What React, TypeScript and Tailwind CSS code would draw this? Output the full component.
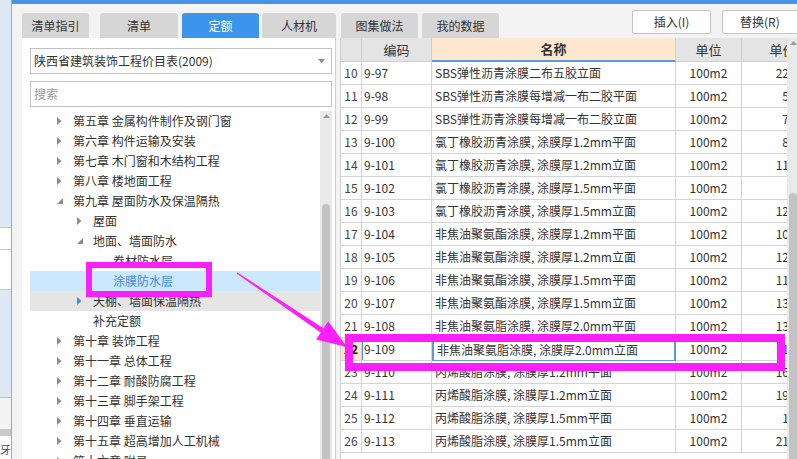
import React from "react";

type TreeItem = {
  level: number;
  arrow: "c" | "e" | null;
  text: string;
  state?: "selected" | "hover";
};

const tree: TreeItem[] = [
  { level: 1, arrow: "c", text: "第五章 金属构件制作及钢门窗" },
  { level: 1, arrow: "c", text: "第六章 构件运输及安装" },
  { level: 1, arrow: "c", text: "第七章 木门窗和木结构工程" },
  { level: 1, arrow: "c", text: "第八章 楼地面工程" },
  { level: 1, arrow: "e", text: "第九章 屋面防水及保温隔热" },
  { level: 2, arrow: "c", text: "屋面" },
  { level: 2, arrow: "e", text: "地面、墙面防水" },
  { level: 3, arrow: null, text: "卷材防水层" },
  { level: 3, arrow: null, text: "涂膜防水层", state: "selected" },
  { level: 2, arrow: "c", text: "天棚、墙面保温隔热", state: "hover" },
  { level: 2, arrow: null, text: "补充定额" },
  { level: 1, arrow: "c", text: "第十章 装饰工程" },
  { level: 1, arrow: "c", text: "第十一章 总体工程" },
  { level: 1, arrow: "c", text: "第十二章 耐酸防腐工程" },
  { level: 1, arrow: "c", text: "第十三章 脚手架工程" },
  { level: 1, arrow: "c", text: "第十四章 垂直运输" },
  { level: 1, arrow: "c", text: "第十五章 超高增加人工机械" },
  { level: 1, arrow: "c", text: "第十六章 附录" },
];

const rows: [string, string, string, string][] = [
  ["10", "9-97", "SBS弹性沥青涂膜二布五胶立面", "2228.41"],
  ["11", "9-98", "SBS弹性沥青涂膜每增减一布二胶平面", "583.17"],
  ["12", "9-99", "SBS弹性沥青涂膜每增减一布二胶立面", "712.09"],
  ["13", "9-100", "氯丁橡胶沥青涂膜, 涂膜厚1.2mm平面", "836.52"],
  ["14", "9-101", "氯丁橡胶沥青涂膜, 涂膜厚1.2mm立面", "1107.84"],
  ["15", "9-102", "氯丁橡胶沥青涂膜, 涂膜厚1.5mm平面", ""],
  ["16", "9-103", "氯丁橡胶沥青涂膜, 涂膜厚1.5mm立面", "1245.60"],
  ["17", "9-104", "非焦油聚氨酯涂膜, 涂膜厚1.2mm平面", "1032.18"],
  ["18", "9-105", "非焦油聚氨酯涂膜, 涂膜厚1.2mm立面", "1267.45"],
  ["19", "9-106", "非焦油聚氨酯涂膜, 涂膜厚1.5mm平面", "1154.03"],
  ["20", "9-107", "非焦油聚氨酯涂膜, 涂膜厚1.5mm立面", "1318.77"],
  ["21", "9-108", "非焦油聚氨脂涂膜, 涂膜厚2.0mm平面", "1376.20"],
  ["22", "9-109", "非焦油聚氨脂涂膜, 涂膜厚2.0mm立面", "158.42"],
  ["23", "9-110", "丙烯酸脂涂膜, 涂膜厚1.2mm平面", "1623.50"],
  ["24", "9-111", "丙烯酸脂涂膜, 涂膜厚1.2mm立面", "1945.33"],
  ["25", "9-112", "丙烯酸脂涂膜, 涂膜厚1.5mm平面", "186.40"],
  ["26", "9-113", "丙烯酸脂涂膜, 涂膜厚1.5mm立面", "2108.66"],
];

function Arrow({ kind, blue }: { kind: "c" | "e"; blue?: boolean }) {
  const fill = blue ? "#3b8fe0" : "#8c8c8c";
  if (kind === "c") {
    return (
      <svg width="5" height="8" viewBox="0 0 5 8">
        <polygon points="0,0 4.5,4 0,8" fill={fill} />
      </svg>
    );
  }
  return (
    <svg width="6" height="6" viewBox="0 0 6 6">
      <polygon points="6,0 6,6 0,6" fill={fill} />
    </svg>
  );
}

function ScrollBar({ thumbTop }: { thumbTop: string }) {
  return (
    <div className="w-[12px] shrink-0 bg-[#e9e9e9] flex flex-col items-center">
      <svg width="7" height="4" viewBox="0 0 7 4" className="mt-[3px]">
        <polygon points="0,4 3.5,0 7,4" fill="#9a9a9a" />
      </svg>
      <div className={`w-[8px] flex-1 rounded-t-[4px] bg-[#c3c3c3] ${thumbTop}`} />
    </div>
  );
}

export default function App() {
  return (
    <div className="relative w-[797px] h-[459px] overflow-hidden flex font-['Noto_Sans_CJK_SC',sans-serif] text-[12px] text-[#333]">
      {/* background window strip */}
      <div className="w-[12px] shrink-0 flex flex-col border-r border-[#a9a9a9]">
        <div className="h-[228px] bg-[#dfe9f6] border-b border-[#b9c3cf]" />
        <div className="h-[22px] bg-white border-b border-[#c9c9c9]" />
        <div className="h-[40px] bg-white border-b border-[#c9c9c9]" />
        <div className="h-[108px] bg-[#dfe9f6] border-b border-[#b9c3cf]" />
        <div className="h-[31px] bg-[#f4f4f4]" />
        <div className="h-[7px] bg-[#c9c9c9]" />
        <div className="flex-1 bg-white text-[11px] leading-none pt-[8px] text-[#555] overflow-hidden whitespace-nowrap">牙有</div>
      </div>

      <div className="flex-1 flex flex-col bg-[#f3f3f3] min-w-0">
        <div className="h-[4px] bg-[#4594e6]" />

        {/* tabs + buttons */}
        <div className="h-[34px] flex items-start pl-[10px]">
          <div className="flex items-end h-[34px] pt-[9px]">
            <div className="w-[67px] h-[25px] rounded-t-[3px] bg-[#d6d6d6] flex items-center justify-center">清单指引</div>
            <div className="w-[78px] h-[25px] ml-[11px] rounded-t-[3px] bg-[#d6d6d6] flex items-center justify-center">清单</div>
            <div className="w-[77px] h-[25px] ml-[4px] rounded-t-[3px] bg-[#3c95ea] text-white flex items-center justify-center">定额</div>
            <div className="w-[74px] h-[25px] ml-[3px] rounded-t-[3px] bg-[#d6d6d6] flex items-center justify-center">人材机</div>
            <div className="w-[77px] h-[25px] ml-[5px] rounded-t-[3px] bg-[#d6d6d6] flex items-center justify-center">图集做法</div>
            <div className="w-[77px] h-[25px] ml-[4px] rounded-t-[3px] bg-[#d6d6d6] flex items-center justify-center">我的数据</div>
          </div>
          <div className="ml-[133px] mt-[6px] w-[79px] h-[24px] shrink-0 bg-white border border-[#c4c4c4] rounded-[2px] flex items-center justify-center">插入(I)</div>
          <div className="ml-[11px] mt-[6px] w-[80px] h-[24px] shrink-0 bg-white border border-[#c4c4c4] rounded-[2px] flex items-center pl-[17px]">替换(R)</div>
        </div>

        <div className="flex-1 flex min-h-0">
          {/* left panel */}
          <div className="ml-[10px] w-[314px] shrink-0 bg-white border-r border-[#cfcfcf] flex flex-col">
            <div className="mx-[8px] mr-[3px] mt-[10px] h-[26px] border border-[#c2c2c2] flex items-center pl-[3px] pr-[6px]">
              <span className="flex-1">陕西省建筑装饰工程价目表(2009)</span>
              <svg width="7" height="4" viewBox="0 0 7 4">
                <polygon points="0,0 7,0 3.5,4" fill="#8c8c8c" />
              </svg>
            </div>
            <div className="mx-[8px] mr-[3px] mt-[7px] h-[26px] border border-[#c2c2c2] flex items-center pl-[3px] text-[#9a9a9a]">搜索</div>
            <div className="flex-1 flex mt-[3px] min-h-0 pl-[8px] pr-[3px]">
              <div className="flex-1 pt-[1px] overflow-hidden">
                {tree.map((t, i) => (
                  <div
                    key={i}
                    className={`h-[20px] flex items-center whitespace-nowrap ${
                      t.state === "selected"
                        ? "bg-[#cce8ff] text-[#3d8be0]"
                        : t.state === "hover"
                        ? "bg-[#e5e5e5]"
                        : ""
                    } ${t.level === 1 ? "pl-[24px]" : t.level === 2 ? "pl-[44px]" : "pl-[64px]"}`}
                  >
                    <div className="w-[19px] flex items-center pl-[3px]">
                      {t.arrow && <Arrow kind={t.arrow} blue={t.state === "hover"} />}
                    </div>
                    <span>{t.text}</span>
                  </div>
                ))}
              </div>
              <div className="flex pt-[1px]">
                <ScrollBar thumbTop="mt-[86px]" />
              </div>
            </div>
          </div>

          {/* table */}
          <div className="ml-[4px] flex-1 flex min-w-0">
            <div className="flex-1 overflow-hidden border-l border-[#cfcfcf] bg-white">
              <div className="w-[482px]">
                <div className="h-[24px] flex text-[13px]">
                  <div className="w-[21px] bg-[#e4e4e4] border-r border-b border-[#cfcfcf]" />
                  <div className="w-[70px] bg-[#e4e4e4] border-r border-b border-[#cfcfcf] flex items-center justify-center">编码</div>
                  <div className="w-[244px] bg-[#fde8cf] border-r border-b-2 border-r-[#cfcfcf] border-b-[#5b9bd5] flex items-center justify-center font-bold">名称</div>
                  <div className="w-[66px] bg-[#e4e4e4] border-r border-b border-[#cfcfcf] flex items-center justify-center">单位</div>
                  <div className="w-[81px] bg-[#e4e4e4] border-b border-[#cfcfcf] flex items-center justify-center">单价</div>
                </div>
                {rows.map(([n, code, name, price]) => {
                  const sel = n === "22";
                  return (
                    <div key={n} className="h-[23px] flex whitespace-nowrap">
                      <div className={`w-[21px] border-r border-b border-[#d4d4d4] flex items-center justify-center ${sel ? "bg-[#fde3c8] font-bold text-[#111]" : "text-[#444]"}`}>{n}</div>
                      <div className={`w-[70px] border-r border-b border-[#d4d4d4] flex items-center pl-[2px] ${sel ? "shadow-[inset_1px_0_0_#4a90d9]" : ""}`}>{code}</div>
                      <div className={`w-[244px] border-b flex items-center pl-[3px] ${sel ? "border-2 border-[#5b9bd5] pl-[2px]" : "border-r border-[#d4d4d4]"}`}>{name}</div>
                      <div className="w-[66px] border-r border-b border-[#d4d4d4] flex items-center justify-center">100m2</div>
                      <div className="w-[81px] border-b border-[#d4d4d4] flex items-center justify-end pr-[4px]">{price}</div>
                    </div>
                  );
                })}
              </div>
            </div>
            <div className="flex w-[10px] shrink-0 overflow-hidden">
              <ScrollBar thumbTop="mt-[148px]" />
            </div>
          </div>
        </div>
      </div>

      {/* annotation overlay */}
      <svg className="absolute inset-0 pointer-events-none" width="797" height="459" viewBox="0 0 797 459">
        <rect x="89" y="265" width="120" height="29" fill="none" stroke="#fb1ffb" strokeWidth="6" />
        <rect x="349" y="338" width="432" height="29" fill="none" stroke="#fb1ffb" strokeWidth="8" />
        <polygon
          points="237.4,272.4 323.5,328.2 328.2,321.2 347,347 316,339.4 320.7,332.4 236.6,273.6"
          fill="#fb1ffb"
        />
      </svg>
    </div>
  );
}
